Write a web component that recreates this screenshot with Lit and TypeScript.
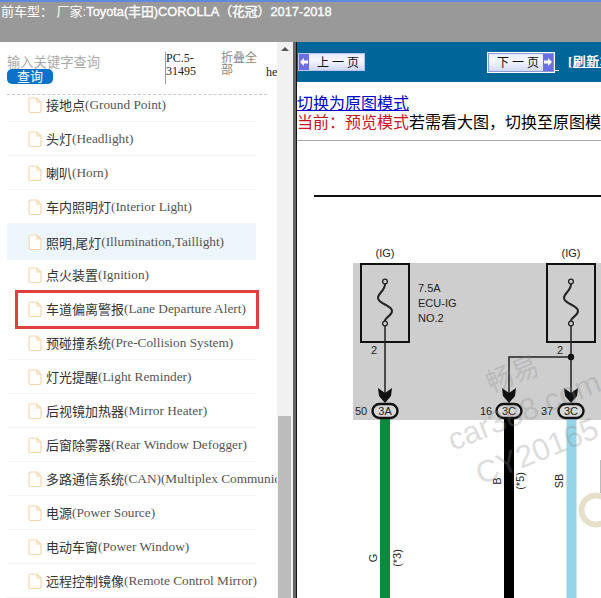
import { LitElement, html, css, svg } from "lit";
import { customElement } from "lit/decorators.js";

const ITEMS: [string, string][] = [
  ["接地点", "(Ground Point)"],
  ["头灯", "(Headlight)"],
  ["喇叭", "(Horn)"],
  ["车内照明灯", "(Interior Light)"],
  ["照明,尾灯", "(Illumination,Taillight)"],
  ["点火装置", "(Ignition)"],
  ["车道偏离警报", "(Lane Departure Alert)"],
  ["预碰撞系统", "(Pre-Collision System)"],
  ["灯光提醒", "(Light Reminder)"],
  ["后视镜加热器", "(Mirror Heater)"],
  ["后窗除雾器", "(Rear Window Defogger)"],
  ["多路通信系统", "(CAN)(Multiplex Communication System)"],
  ["电源", "(Power Source)"],
  ["电动车窗", "(Power Window)"],
  ["远程控制镜像", "(Remote Control Mirror)"],
];

const fuse = (x: number) => svg`
  <rect x="${x}" y="264" width="48" height="78" fill="none" stroke="#111" stroke-width="2"/>
  <circle cx="${x + 24}" cy="281.5" r="2.4" fill="none" stroke="#222" stroke-width="1.3"/>
  <circle cx="${x + 24}" cy="323.5" r="2.4" fill="none" stroke="#222" stroke-width="1.3"/>
  <path d="M${x + 24} 284C${x + 24} 291 ${x + 17} 293 ${x + 17} 298C${x + 17} 304 ${x + 31} 305 ${x + 31} 311C${x + 31} 316 ${x + 24} 317 ${x + 24} 321" fill="none" stroke="#222" stroke-width="2"/>`;

const connector = (x: number, label: string) => svg`
  <rect x="${x - 12.5}" y="404" width="25" height="14" rx="7" fill="#d8d8d8" stroke="#111" stroke-width="2.4"/>
  <text x="${x}" y="415" class="d c">${label}</text>`;

const arrow = (x: number) => svg`
  <path d="M${x - 7} 388L${x} 393L${x + 7} 388L${x + 6} 396L${x} 403L${x - 6} 396Z" fill="#111"/>`;

const vtext = (cx: number, cy: number, t: string) => svg`
  <text transform="translate(${cx + 4} ${cy}) rotate(-90)" class="d c">${t}</text>`;

@customElement("app-root")
export class AppRoot extends LitElement {
  static styles = css`
    :host { display: block; width: 601px; height: 598px; overflow: hidden; background: #fff; font-family: "Liberation Serif", "Noto Sans CJK SC", serif; }
    .top { height: 40px; box-sizing: content-box; border-top: 2px solid #6088dc; background: #999; color: #fff; padding-left: 1px; font: 13px/20px "Liberation Sans", "Noto Sans CJK SC", sans-serif; white-space: nowrap; overflow: hidden; }
    .top b { font-weight: normal; font-size: 12.8px; -webkit-text-stroke: 0.35px #fff; }
    .body { display: flex; height: 556px; }
    .left { width: 277px; flex: none; overflow: hidden; }
    .tools { display: flex; height: 53px; margin-left: 7px; width: 260px; border-bottom: 1px dashed #ccc; box-sizing: border-box; }
    .search { width: 158px; flex: none; padding-top: 12px; color: #aaa; font: 13.3px/17px "Liberation Sans", "Noto Sans CJK SC", sans-serif; }
    .btn { display: block; width: 46px; height: 15px; border-radius: 5px; background: #0a73c9; color: #fff; text-align: center; font-size: 13px; line-height: 15px; margin-top: -2px; }
    .pc { width: 56px; flex: none; height: 32px; margin-top: 10px; border-left: 1px solid #999; font-size: 12px; line-height: 13px; color: #222; box-sizing: border-box; }
    .fold { width: 45px; flex: none; margin-top: 10px; color: #888; font: 12px/12px "Liberation Sans", "Noto Sans CJK SC", sans-serif; }
    .he { flex: none; width: 11px; font-size: 12px; line-height: 14px; color: #222; margin-top: 23px; }
    ul { list-style: none; margin: 0; padding: 0; width: 277px; }
    li { position: relative; display: flex; align-items: center; margin-left: 7px; width: 249px; height: 34px; box-sizing: border-box; border-bottom: 1px solid #f5f5f5; padding-left: 21px; white-space: nowrap; font-size: 13.3px; color: #555; }
    li:first-child { height: 27px; padding-bottom: 7px; }
    li.hl { background: #eef6fd; height: 36px; margin-bottom: -2px; border-bottom: 0; }
    li.mark::after { content: ""; position: absolute; left: 8px; right: -3px; top: -2px; bottom: -4px; border: 3px solid #e04040; }
    li .cn { color: #333; font-size: 13px; margin-left: 4px; }
    li svg { flex: none; }
    .scroll { width: 16px; flex: none; background: #f1f1f1; display: flex; flex-direction: column; }
    .arrow { height: 17px; flex: none; display: flex; justify-content: center; padding: 5px 1px 0 0; box-sizing: border-box; }
    .arrow::after { content: ""; width: 0; height: 0; border: 4px solid transparent; border-top: 0; border-bottom: 4px solid #555; }
    .thumb { margin: 357px 2px 0 1px; flex: 1; background: #bcbcbc; }
    .sep { width: 4px; flex: none; background: #666; border-right: 1px solid #111; box-sizing: border-box; }
    .right { flex: 1; min-width: 0; overflow: hidden; }
    .nav { height: 40px; background: #006699; display: flex; align-items: center; white-space: nowrap; color: #fff; }
    .pg { width: 67px; height: 18px; flex: none; background: linear-gradient(#e6eaff, #f6f7ff 40%, #d0d7f4); border: 1px solid #b9c5ee; box-sizing: border-box; display: flex; align-items: center; color: #111; font: 12px/16px "Noto Sans CJK SC", sans-serif; letter-spacing: 3px; position: relative; }
    .pg .arr { position: absolute; top: 0; bottom: 0; width: 10px; background: #6a70e4; display: flex; align-items: center; justify-content: center; }
    .prev { margin-left: 1px; padding-left: 18px; }
    .prev .arr { left: 0; }
    .next { margin-left: 122px; width: 68px; height: 21px; border: 1px solid #fff; box-shadow: inset 0 0 0 1px #8c9ad8; padding-left: 9px; }
    .next .arr { right: 1px; top: 1px; bottom: 1px; }
    .dash { width: 4px; height: 1px; background: #fff; flex: none; align-self: flex-end; margin-bottom: 11px; }
    .refresh { margin-left: 9px; font: bold 13px/16px "Liberation Serif", "Noto Sans CJK SC", serif; letter-spacing: 0.5px; text-decoration: underline; }
    .mode { font: 16px/19px "Liberation Serif", "Noto Sans CJK SC", serif; padding-top: 12px; white-space: nowrap; color: #000; height: 58px; box-sizing: border-box; }
    .mode a { color: #00c; text-decoration: underline; display: block; }
    .mode em { color: #cc1420; font-style: normal; }
    .rule { height: 1px; background: #aaa; }
    .diagram { display: block; }
    .d { font-family: "Liberation Sans", sans-serif; font-size: 11px; fill: #222; }
    .c { text-anchor: middle; }
    .wm { font-family: "Liberation Sans", "Noto Sans CJK SC", sans-serif; fill: #888; fill-opacity: .3; }
  `;

  render() {
    return html`
      <div class="top">前车型： 厂家:<b>Toyota(丰田)COROLLA（花冠）2017-2018</b></div>
      <div class="body">
        <div class="left">
          <div class="tools">
            <div class="search">输入关键字查询<span class="btn">查询</span></div>
            <div class="pc">PC.5-<br />31495</div>
            <div class="fold">折叠全部</div>
            <div class="he">he</div>
          </div>
          <ul>
            ${ITEMS.map(([cn, en], i) => html`
              <li class="${i === 4 ? "hl" : i === 6 ? "mark" : ""}">
                <svg width="14" height="16" viewBox="0 0 14 16"><path d="M1 2.5a1.5 1.5 0 0 1 1.5-1.5H9L13 5v9a1.5 1.5 0 0 1-1.5 1.5h-9A1.5 1.5 0 0 1 1 14ZM9 1v4h4" fill="#fff" stroke="#f5d6ac" stroke-width="1.2"/></svg>
                <span class="cn">${cn}</span>${en}
              </li>`)}
          </ul>
        </div>
        <div class="scroll"><div class="arrow"></div><div class="thumb"></div></div>
        <div class="sep"></div>
        <div class="right">
          <div class="nav">
            <div class="pg prev"><span class="arr"><svg width="8" height="8" viewBox="0 0 8 8"><path d="M0 4L4 0V2.5H8V5.5H4V8Z" fill="#fff"/></svg></span>上一页</div>
            <div class="pg next">下一页<span class="arr"><svg width="8" height="8" viewBox="0 0 8 8"><path d="M8 4L4 0V2.5H0V5.5H4V8Z" fill="#fff"/></svg></span></div>
            <div class="dash"></div>
            <div class="refresh">[刷新本页]</div>
          </div>
          <div class="mode"><a>切换为原图模式</a><em>当前：预览模式</em>若需看大图，切换至原图模式</div>
          <div class="rule"></div>
          <svg class="diagram" width="304" height="457" viewBox="297 141 304 457">
            <rect x="353" y="263" width="248" height="157" fill="#cecece"/>
            <rect x="314" y="195" width="287" height="2" fill="#111"/>
            <text x="385" y="257" class="d c">(IG)</text>
            <text x="571" y="257" class="d c">(IG)</text>
            ${fuse(361)}${fuse(547)}
            <text x="418" y="292" class="d">7.5A</text>
            <text x="418" y="307" class="d">ECU-IG</text>
            <text x="418" y="322" class="d">NO.2</text>
            <text x="371" y="354" class="d">2</text>
            <text x="557" y="354" class="d">2</text>
            <path d="M385 326V396M571 326V396M571 357H509V396" fill="none" stroke="#222" stroke-width="1.5"/>
            <circle cx="571" cy="357" r="3.2" fill="#111"/>
            ${arrow(385)}${arrow(509)}${arrow(571)}
            <rect x="380" y="419" width="10" height="179" fill="#0a8a3c"/>
            <rect x="504" y="419" width="10" height="179" fill="#000"/>
            <rect x="566.5" y="419" width="10" height="179" fill="#95d4e8"/>
            ${connector(385, "3A")}${connector(509, "3C")}${connector(571, "3C")}
            <text x="355" y="415" class="d">50</text>
            <text x="480" y="415" class="d">16</text>
            <text x="541" y="415" class="d">37</text>
            ${vtext(373, 558, "G")}${vtext(397, 558, "(*3)")}
            ${vtext(497, 481, "B")}${vtext(520, 481, "(*5)")}
            ${vtext(559, 481, "SB")}
            <text transform="translate(491 393) rotate(-22)" class="wm" font-size="27">畅易</text>
            <text transform="translate(453 451) rotate(-22)" class="wm" font-size="31">car388.com</text>
            <text transform="translate(481 485) rotate(-22)" class="wm" font-size="31">CY20165</text>
            <circle cx="596" cy="510" r="14.5" fill="none" stroke="#e6dfca" stroke-width="6"/>
            <rect x="600" y="460" width="1" height="33" fill="#bbb"/>
          </svg>
        </div>
      </div>
    `;
  }
}
